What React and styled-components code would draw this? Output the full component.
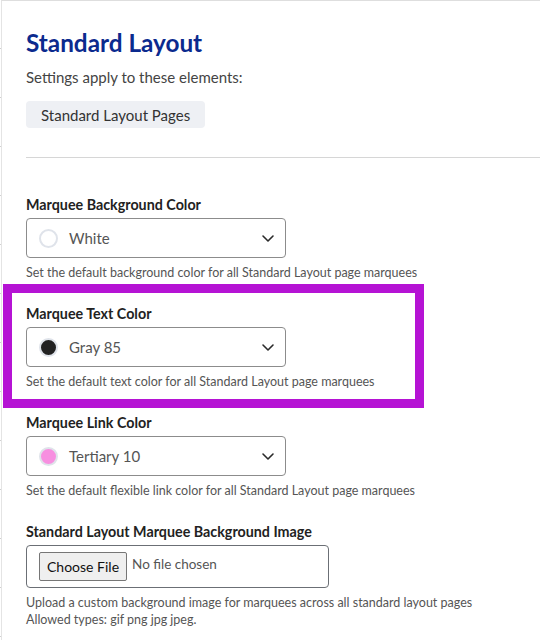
import React from "react";
import styled, { createGlobalStyle } from "styled-components";

const Global = createGlobalStyle`
  html, body { margin: 0; padding: 0; background: #fff; }
  body {
    font-family: Lato, "Open Sans", Arial, sans-serif;
    background-image: repeating-linear-gradient(to bottom, transparent 0 48px, #d0d0d0 48px 49px);
    background-size: 1px 100%;
    background-repeat: no-repeat;
  }
`;

const Page = styled.div`
  margin-left: 1px;
  min-height: 640px;
  border-top: 1px solid #dedede;
  border-left: 1px solid #e4e4e4;
  padding: 25px 0 0 24px;
  box-sizing: border-box;
  color: #333;
`;

const Header = styled.header`
  display: flex;
  flex-direction: column;
  align-items: flex-start;
  padding-bottom: 29px;
  border-bottom: 1px solid #d6d6d6;
`;

const Title = styled.h1`
  margin: 0;
  font-size: 24.3px;
  line-height: 34px;
  font-weight: 700;
  color: #0b2a8e;
`;

const Intro = styled.p`
  margin: 7px 0 0;
  font-size: 15px;
  line-height: 20px;
  color: #444;
`;

const Tag = styled.span`
  margin-top: 14px;
  display: inline-flex;
  align-items: center;
  height: 27px;
  padding: 0 15px;
  border-radius: 4px;
  background: #eef0f4;
  font-size: 15px;
  color: #333;
`;

const Fields = styled.div`
  display: flex;
  flex-direction: column;
  gap: 23px;
  padding-top: 37px;
`;

const Field = styled.div`
  position: relative;
  display: flex;
  flex-direction: column;
  align-items: flex-start;

  ${(p) =>
    p.$highlight &&
    `
    &::after {
      content: "";
      position: absolute;
      top: -20px;
      left: -23px;
      width: 421px;
      bottom: -18px;
      border: 9px solid #b513d4;
      box-sizing: border-box;
      pointer-events: none;
    }
  `}
`;

const Label = styled.label`
  font-size: 14.3px;
  line-height: 20px;
  font-weight: 700;
  color: #222;
`;

const Select = styled.div`
  margin-top: 3px;
  box-sizing: border-box;
  width: 260px;
  height: 40px;
  border: 1px solid #8c8c8c;
  border-radius: 4px;
  display: flex;
  align-items: center;
  padding: 0 10px 0 12px;
  gap: 11px;
`;

const Swatch = styled.span`
  flex: none;
  width: 19px;
  height: 19px;
  border-radius: 50%;
  box-sizing: border-box;
  border: 2px solid #dfe3ea;
  background: ${(p) => p.$color};
`;

const Value = styled.span`
  flex: 1;
  font-size: 15px;
  color: #555;
`;

const Chevron = styled.svg`
  flex: none;
  width: 14px;
  height: 14px;
`;

const Help = styled.p`
  margin: 6px 0 0;
  font-size: 12.5px;
  line-height: 17px;
  color: #555;
`;

const FileBox = styled.div`
  margin-top: 3px;
  box-sizing: border-box;
  width: 303px;
  height: 43px;
  border: 1px solid #6b6f75;
  border-radius: 4px;
  display: flex;
  align-items: center;
  padding: 0 12px;
  gap: 5px;
`;

const FileButton = styled.span`
  display: inline-flex;
  align-items: center;
  height: 29px;
  padding: 0 7px;
  box-sizing: border-box;
  background: #efefef;
  border: 1px solid #767676;
  border-radius: 2px;
  font-size: 14px;
  color: #111;
`;

const FileName = styled.span`
  font-size: 13.5px;
  color: #555;
  margin-top: -5px;
`;

const ChevronIcon = () => (
  <Chevron viewBox="0 0 14 14" fill="none">
    <path d="M2 5l5 5 5-5" stroke="#2a2a2a" strokeWidth="1.6" strokeLinecap="round" strokeLinejoin="round" />
  </Chevron>
);

const ColorField = ({ label, color, value, help, highlight }) => (
  <Field $highlight={highlight}>
    <Label>{label}</Label>
    <Select>
      <Swatch $color={color} />
      <Value>{value}</Value>
      <ChevronIcon />
    </Select>
    <Help>{help}</Help>
  </Field>
);

export default function App() {
  return (
    <>
      <Global />
      <Page>
        <Header>
          <Title>Standard Layout</Title>
          <Intro>Settings apply to these elements:</Intro>
          <Tag>Standard Layout Pages</Tag>
        </Header>
        <Fields>
          <ColorField
            label="Marquee Background Color"
            color="#ffffff"
            value="White"
            help="Set the default background color for all Standard Layout page marquees"
          />
          <ColorField
            label="Marquee Text Color"
            color="#222222"
            value="Gray 85"
            help="Set the default text color for all Standard Layout page marquees"
            highlight
          />
          <ColorField
            label="Marquee Link Color"
            color="#f78fe0"
            value="Tertiary 10"
            help="Set the default flexible link color for all Standard Layout page marquees"
          />
          <Field>
            <Label>Standard Layout Marquee Background Image</Label>
            <FileBox>
              <FileButton>Choose File</FileButton>
              <FileName>No file chosen</FileName>
            </FileBox>
            <Help>
              Upload a custom background image for marquees across all standard layout pages
              <br />
              Allowed types: gif png jpg jpeg.
            </Help>
          </Field>
        </Fields>
      </Page>
    </>
  );
}
